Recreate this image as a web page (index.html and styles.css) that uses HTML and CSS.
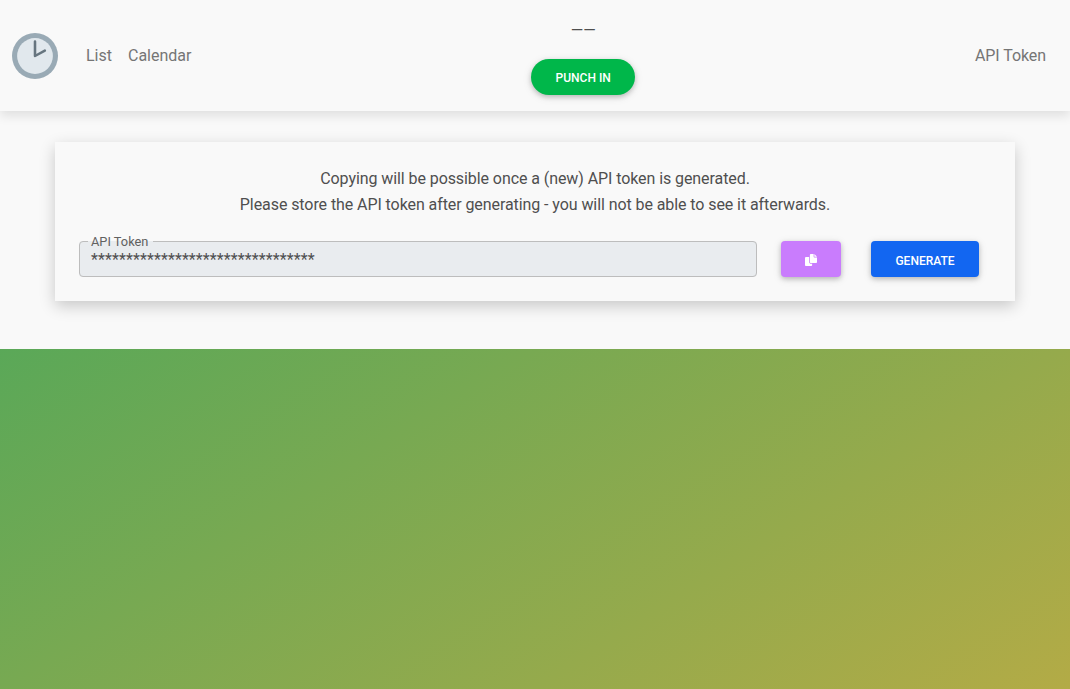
FILE: index.html
```html
<!DOCTYPE html>
<html lang="en">
<head>
<meta charset="utf-8">
<title>API Token</title>
<link rel="stylesheet" href="styles.css">
</head>
<body>
<header class="navbar">
  <a class="brand" href="#" aria-label="Home">
    <svg width="46" height="46" viewBox="0 0 36 36">
      <circle cx="18" cy="18" r="18" fill="#99aab5"/>
      <circle cx="18" cy="18" r="14" fill="#e1e8ed"/>
      <path d="M18 6.7V18l7.7-4.2" fill="none" stroke="#66757f" stroke-width="2" stroke-linecap="round" stroke-linejoin="round"/>
    </svg>
  </a>
  <nav class="links">
    <a href="#">List</a>
    <a href="#">Calendar</a>
  </nav>
  <div class="punch">
    <div class="timer">——</div>
    <button class="btn btn-punch">Punch in</button>
  </div>
  <nav class="links links-end"><a href="#">API Token</a></nav>
</header>
<main class="content">
  <section class="card">
    <p class="hint">Copying will be possible once a (new) API token is generated.<br>Please store the API token after generating - you will not be able to see it afterwards.</p>
    <div class="row">
      <fieldset class="field">
        <legend>API Token</legend>
        <div class="value">********************************</div>
      </fieldset>
      <button class="btn btn-copy" aria-label="Copy">
        <svg width="12" height="12" viewBox="0 0 512 512" fill="currentColor"><path d="M256 0h112v112c0 18 14 32 32 32h112v192c0 26-22 48-48 48H256c-26 0-48-22-48-48V48c0-26 22-48 48-48zM400 0l112 112H400zM48 128h128v208c0 44 36 80 80 80h48v48c0 26-22 48-48 48H48c-26 0-48-22-48-48V176c0-26 22-48 48-48z"/></svg>
      </button>
      <button class="btn btn-generate">Generate</button>
    </div>
  </section>
</main>
</body>
</html>
```
FILE: styles.css
```css
* { box-sizing: border-box; }

body {
  margin: 0;
  min-height: 100vh;
  font: 400 16px/25.6px Roboto, sans-serif;
  color: #4f4f4f;
  background: linear-gradient(to bottom right, rgb(60, 167, 94), rgb(179, 171, 70));
}

.navbar {
  position: relative;
  display: flex;
  align-items: center;
  height: 111px;
  padding: 0 16px 0 12px;
  background: #f9f9f9;
  box-shadow: 0 5px 10px 0 rgba(0, 0, 0, .1);
}

.brand { display: flex; margin-right: 20px; }

.links { display: flex; }

.links a {
  padding: 0 8px;
  color: #757575;
  text-decoration: none;
}

.links-end { letter-spacing: -.08px; }

.punch {
  display: flex;
  flex: 1;
  flex-direction: column;
  align-items: center;
  height: 100%;
  padding-top: 18px;
}

.timer {
  height: 26px;
  margin-bottom: 15px;
}

.btn {
  height: 36px;
  padding: 3px 24px 0;
  border: 0;
  border-radius: 4px;
  font: 500 12px/18px Roboto, sans-serif;
  text-transform: uppercase;
  color: #fff;
  box-shadow: 0 2px 5px 0 rgba(0, 0, 0, .2), 0 2px 10px 0 rgba(0, 0, 0, .1);
}

.btn-punch {
  width: 104px;
  padding-top: 2px;
  border-radius: 18px;
  background: #00b74a;
}

.content {
  height: 238px;
  padding: 31px 55px 0;
  background: #f9f9f9;
}

.card {
  height: 159px;
  padding: 24px 36px 0 24px;
  background: #f9f9f9;
  box-shadow: 0 5px 15px 0 rgba(0, 0, 0, .2);
}

.hint {
  width: 912px;
  margin: 0 0 16px;
  text-align: center;
  letter-spacing: -.08px;
}

.row { display: flex; align-items: flex-end; }

.field {
  flex: 1;
  height: 44px;
  min-width: 0;
  margin: 0 24px 0 0;
  padding: 0 11px;
  border: 1px solid #bdbdbd;
  border-radius: 4px;
  background: #e9ecef;
}

.field legend {
  height: 16px;
  margin-left: -3px;
  padding: 0 5px 0 3px;
  font-size: 12.8px;
  line-height: 17px;
  color: #616161;
}

.value { margin-top: -2px; letter-spacing: .1px; }

.btn-copy {
  width: 60px;
  margin-right: 30px;
  padding-top: 2px;
  background: #c97cfd;
}

.btn-copy svg { display: block; }

.btn-generate {
  width: 108px;
  background: #1266f1;
}
```
